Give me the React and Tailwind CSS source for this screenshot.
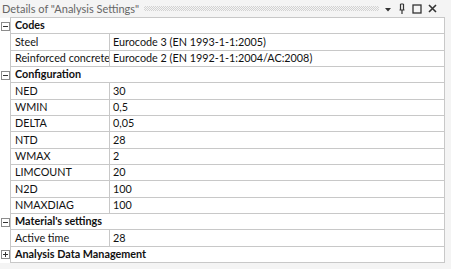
import React from "react";

const sections = [
  {
    title: "Codes",
    open: true,
    rows: [
      ["Steel", "Eurocode 3 (EN 1993-1-1:2005)"],
      ["Reinforced concrete", "Eurocode 2 (EN 1992-1-1:2004/AC:2008)"],
    ],
  },
  {
    title: "Configuration",
    open: true,
    rows: [
      ["NED", "30"],
      ["WMIN", "0,5"],
      ["DELTA", "0,05"],
      ["NTD", "28"],
      ["WMAX", "2"],
      ["LIMCOUNT", "20"],
      ["N2D", "100"],
      ["NMAXDIAG", "100"],
    ],
  },
  {
    title: "Material's settings",
    open: true,
    rows: [["Active time", "28"]],
  },
  { title: "Analysis Data Management", open: false, rows: [] },
];

function ExpandBox({ open }) {
  return (
    <svg width="9" height="9" viewBox="0 0 9 9" className="block ml-[1px]">
      <rect x="0.5" y="0.5" width="8" height="8" fill="#fff" stroke="#8c8c8c" />
      <path d="M2 4.5h5" stroke="#333" strokeWidth="1" />
      {!open && <path d="M4.5 2v5" stroke="#333" strokeWidth="1" />}
    </svg>
  );
}

function App() {
  return (
    <div
      className="w-[451px] h-[269px] bg-[#f4f4f4] overflow-hidden text-[#111]"
      style={{ fontFamily: 'Lato, "Noto Sans", sans-serif' }}
    >
      {/* title bar */}
      <div className="flex items-center h-[17px] pl-[2px] pr-[14px]">
        <span className="text-[11px] text-[#666] leading-none whitespace-nowrap">
          Details of "Analysis Settings"
        </span>
        <div
          className="flex-1 h-[5px] ml-[5px] mr-[5px]"
          style={{
            backgroundImage:
              "linear-gradient(45deg, #d2d2d2 25%, transparent 25%, transparent 75%, #d2d2d2 75%), linear-gradient(45deg, #d2d2d2 25%, transparent 25%, transparent 75%, #d2d2d2 75%)",
            backgroundSize: "2px 2px",
            backgroundPosition: "0 0, 1px 1px",
          }}
        />
        <div className="flex items-center gap-[6px]">
          <svg width="8" height="8" viewBox="0 0 8 8">
            <path d="M1 3h6L4 6.5z" fill="#333" />
          </svg>
          <svg width="8" height="11" viewBox="0 0 8 11">
            <path d="M2.5 1v6M5.5 1v6M1.5 7h5M4 7v4M2.5 1h3" stroke="#333" strokeWidth="1.2" fill="none" />
          </svg>
          <svg width="10" height="10" viewBox="0 0 10 10">
            <rect x="1" y="1" width="8" height="8" fill="none" stroke="#333" strokeWidth="1.3" />
          </svg>
          <svg width="9" height="9" viewBox="0 0 9 9">
            <path d="M1 1l7 7M8 1l-7 7" stroke="#333" strokeWidth="1.6" />
          </svg>
        </div>
      </div>

      {/* grid */}
      <div className="w-[445px] text-[10.8px]">
        <div className="ml-[10px] border-t border-[#c8c8c8]" />
        {sections.map((s) => (
          <div key={s.title}>
            <div className="flex h-[16.33px]">
              <div className="w-[10px] flex items-center bg-white">
                <ExpandBox open={s.open} />
              </div>
              <div className="flex-1 flex items-center pl-[4px] font-bold bg-white border-l border-r border-b border-[#c8c8c8] leading-none">
                {s.title}
              </div>
            </div>
            {s.rows.map(([k, v]) => (
              <div key={k} className="flex h-[16.33px]">
                <div className="w-[10px] bg-white" />
                <div className="w-[100px] flex items-center pl-[4px] bg-white border-l border-r border-b border-[#c8c8c8] leading-none whitespace-nowrap overflow-hidden">
                  {k}
                </div>
                <div className="flex-1 flex items-center pl-[3px] bg-white border-r border-b border-[#c8c8c8] leading-none whitespace-nowrap">
                  {v}
                </div>
              </div>
            ))}
          </div>
        ))}
      </div>
    </div>
  );
}

export default App;
